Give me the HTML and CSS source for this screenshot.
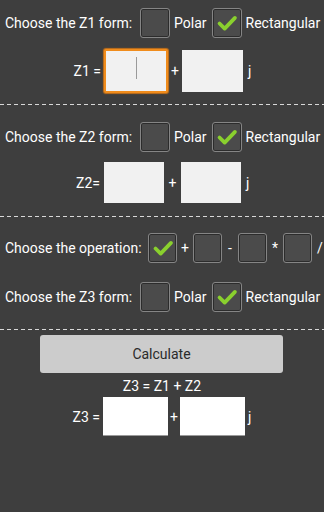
FILE: index.html
```html
<!DOCTYPE html>
<html>
<head>
    <title>Complex Calculator</title>
    <link rel="stylesheet" href="styles.css">
</head>
<body>
    <div class="screen">
        <div class="row form-row first">
            <span class="label">Choose the Z1 form:</span>
            <span class="check"></span>
            <span class="opt">Polar</span>
            <span class="check on"><svg viewBox="0 0 30 30"><polyline points="7,15.5 12.5,21 23.5,9.5"/></svg></span>
            <span class="opt">Rectangular</span>
        </div>
        <div class="row num-row z1">
            <span class="eq">Z1 =</span>
            <span class="box focus"><span class="caret"></span></span>
            <span class="plus">+</span>
            <span class="box"></span>
            <span class="jj">j</span>
        </div>
        <div class="dash"></div>

        <div class="row form-row z2f">
            <span class="label">Choose the Z2 form:</span>
            <span class="check"></span>
            <span class="opt">Polar</span>
            <span class="check on"><svg viewBox="0 0 30 30"><polyline points="7,15.5 12.5,21 23.5,9.5"/></svg></span>
            <span class="opt">Rectangular</span>
        </div>
        <div class="row num-row z2">
            <span class="eq">Z2=</span>
            <span class="box"></span>
            <span class="plus">+</span>
            <span class="box"></span>
            <span class="jj">j</span>
        </div>
        <div class="dash"></div>

        <div class="row form-row op">
            <span class="label">Choose the operation:</span>
            <span class="check on"><svg viewBox="0 0 30 30"><polyline points="7,15.5 12.5,21 23.5,9.5"/></svg></span>
            <span class="sym">+</span>
            <span class="check"></span>
            <span class="sym">-</span>
            <span class="check"></span>
            <span class="sym">*</span>
            <span class="check"></span>
            <span class="sym">/</span>
        </div>
        <div class="row form-row z3f">
            <span class="label">Choose the Z3 form:</span>
            <span class="check"></span>
            <span class="opt">Polar</span>
            <span class="check on"><svg viewBox="0 0 30 30"><polyline points="7,15.5 12.5,21 23.5,9.5"/></svg></span>
            <span class="opt">Rectangular</span>
        </div>
        <div class="dash"></div>

        <div class="calc">Calculate</div>
        <div class="formula">Z3 = Z1 + Z2</div>
        <div class="row num-row z3">
            <span class="eq">Z3 =</span>
            <span class="box white"></span>
            <span class="plus">+</span>
            <span class="box white"></span>
            <span class="jj">j</span>
        </div>
    </div>
</body>
</html>
```

FILE: styles.css
```css
body {
    margin: 0;
    background-color: #3e3e3e;
    color: #ffffff;
    font-family: Roboto, "Noto Sans", sans-serif;
    font-size: 14px;
}

.screen {
    width: 324px;
    height: 512px;
    overflow: hidden;
}

.row {
    display: flex;
    align-items: center;
    white-space: nowrap;
}

.row > span {
    flex-shrink: 0;
}

.form-row {
    height: 30px;
    padding-left: 5px;
}

.first { margin-top: 8px; }
.z2f { margin-top: 17px; }
.op { margin-top: 16px; }
.z3f { margin-top: 19px; }

.label {
    width: 135px;
}

.op .label { width: 143px; }

.check {
    box-sizing: border-box;
    width: 30px;
    height: 30px;
    border: 1px solid #858585;
    border-radius: 3px;
    background-color: #4b4b4b;
    box-shadow: inset 0 0 0 1px #2c2c2c;
}

.check svg {
    width: 28px;
    height: 28px;
    display: block;
}

.check polyline {
    fill: none;
    stroke: #8ad02e;
    stroke-width: 4;
    stroke-linecap: round;
    stroke-linejoin: round;
}

.opt {
    margin: 0 5px 0 4px;
}

.sym {
    width: 15px;
    text-align: center;
}

.op .check { width: 29px; }
.op .check:first-of-type { width: 30px; }
.op .sym { width: 16px; }

.num-row {
    margin-top: 11px;
}

.eq {
    width: 101px;
    text-align: right;
    margin-right: 3px;
}

.box {
    box-sizing: border-box;
    width: 61px;
    height: 42px;
    background-color: #f1f1f1;
    position: relative;
}

.box.focus {
    width: 64px;
    height: 44px;
    border: 2px solid #f08c1c;
    border-radius: 2px;
    box-shadow: 0 0 1px 1px #c4711a;
}

.caret {
    position: absolute;
    left: 30px;
    top: 6px;
    width: 1px;
    height: 22px;
    background-color: #9a9a9a;
}

.plus {
    width: 14px;
    text-align: center;
}

.jj {
    margin-left: 5px;
}

.z2 { margin-top: 10px; }
.z2 .box { width: 60px; height: 41px; }
.z2 .eq { width: 100px; margin-right: 4px; }
.z2 .plus { width: 17px; }

.dash {
    height: 1px;
    margin-top: 11px;
    background: repeating-linear-gradient(90deg, #d8d8d8 0 4px, transparent 4px 7px);
}

.z2 + .dash { margin-top: 13px; }
.z3f + .dash { margin-top: 17px; }

.calc {
    margin: 5px 41px 0 40px;
    height: 38px;
    background-color: #cccccc;
    border-radius: 3px;
    color: #2a2a2a;
    display: flex;
    align-items: center;
    justify-content: center;
}

.formula {
    text-align: center;
    margin-top: 4px;
    height: 18px;
    line-height: 18px;
}

.z3 { margin-top: 2px; }
.z3 .box.white {
    width: 65px;
    height: 39px;
    background-color: #ffffff;
    border-bottom: 1px solid #9a9a9a;
}
.z3 .eq { width: 100px; }
.z3 .plus { width: 12px; }
.z3 .jj { margin-left: 3px; }
```
